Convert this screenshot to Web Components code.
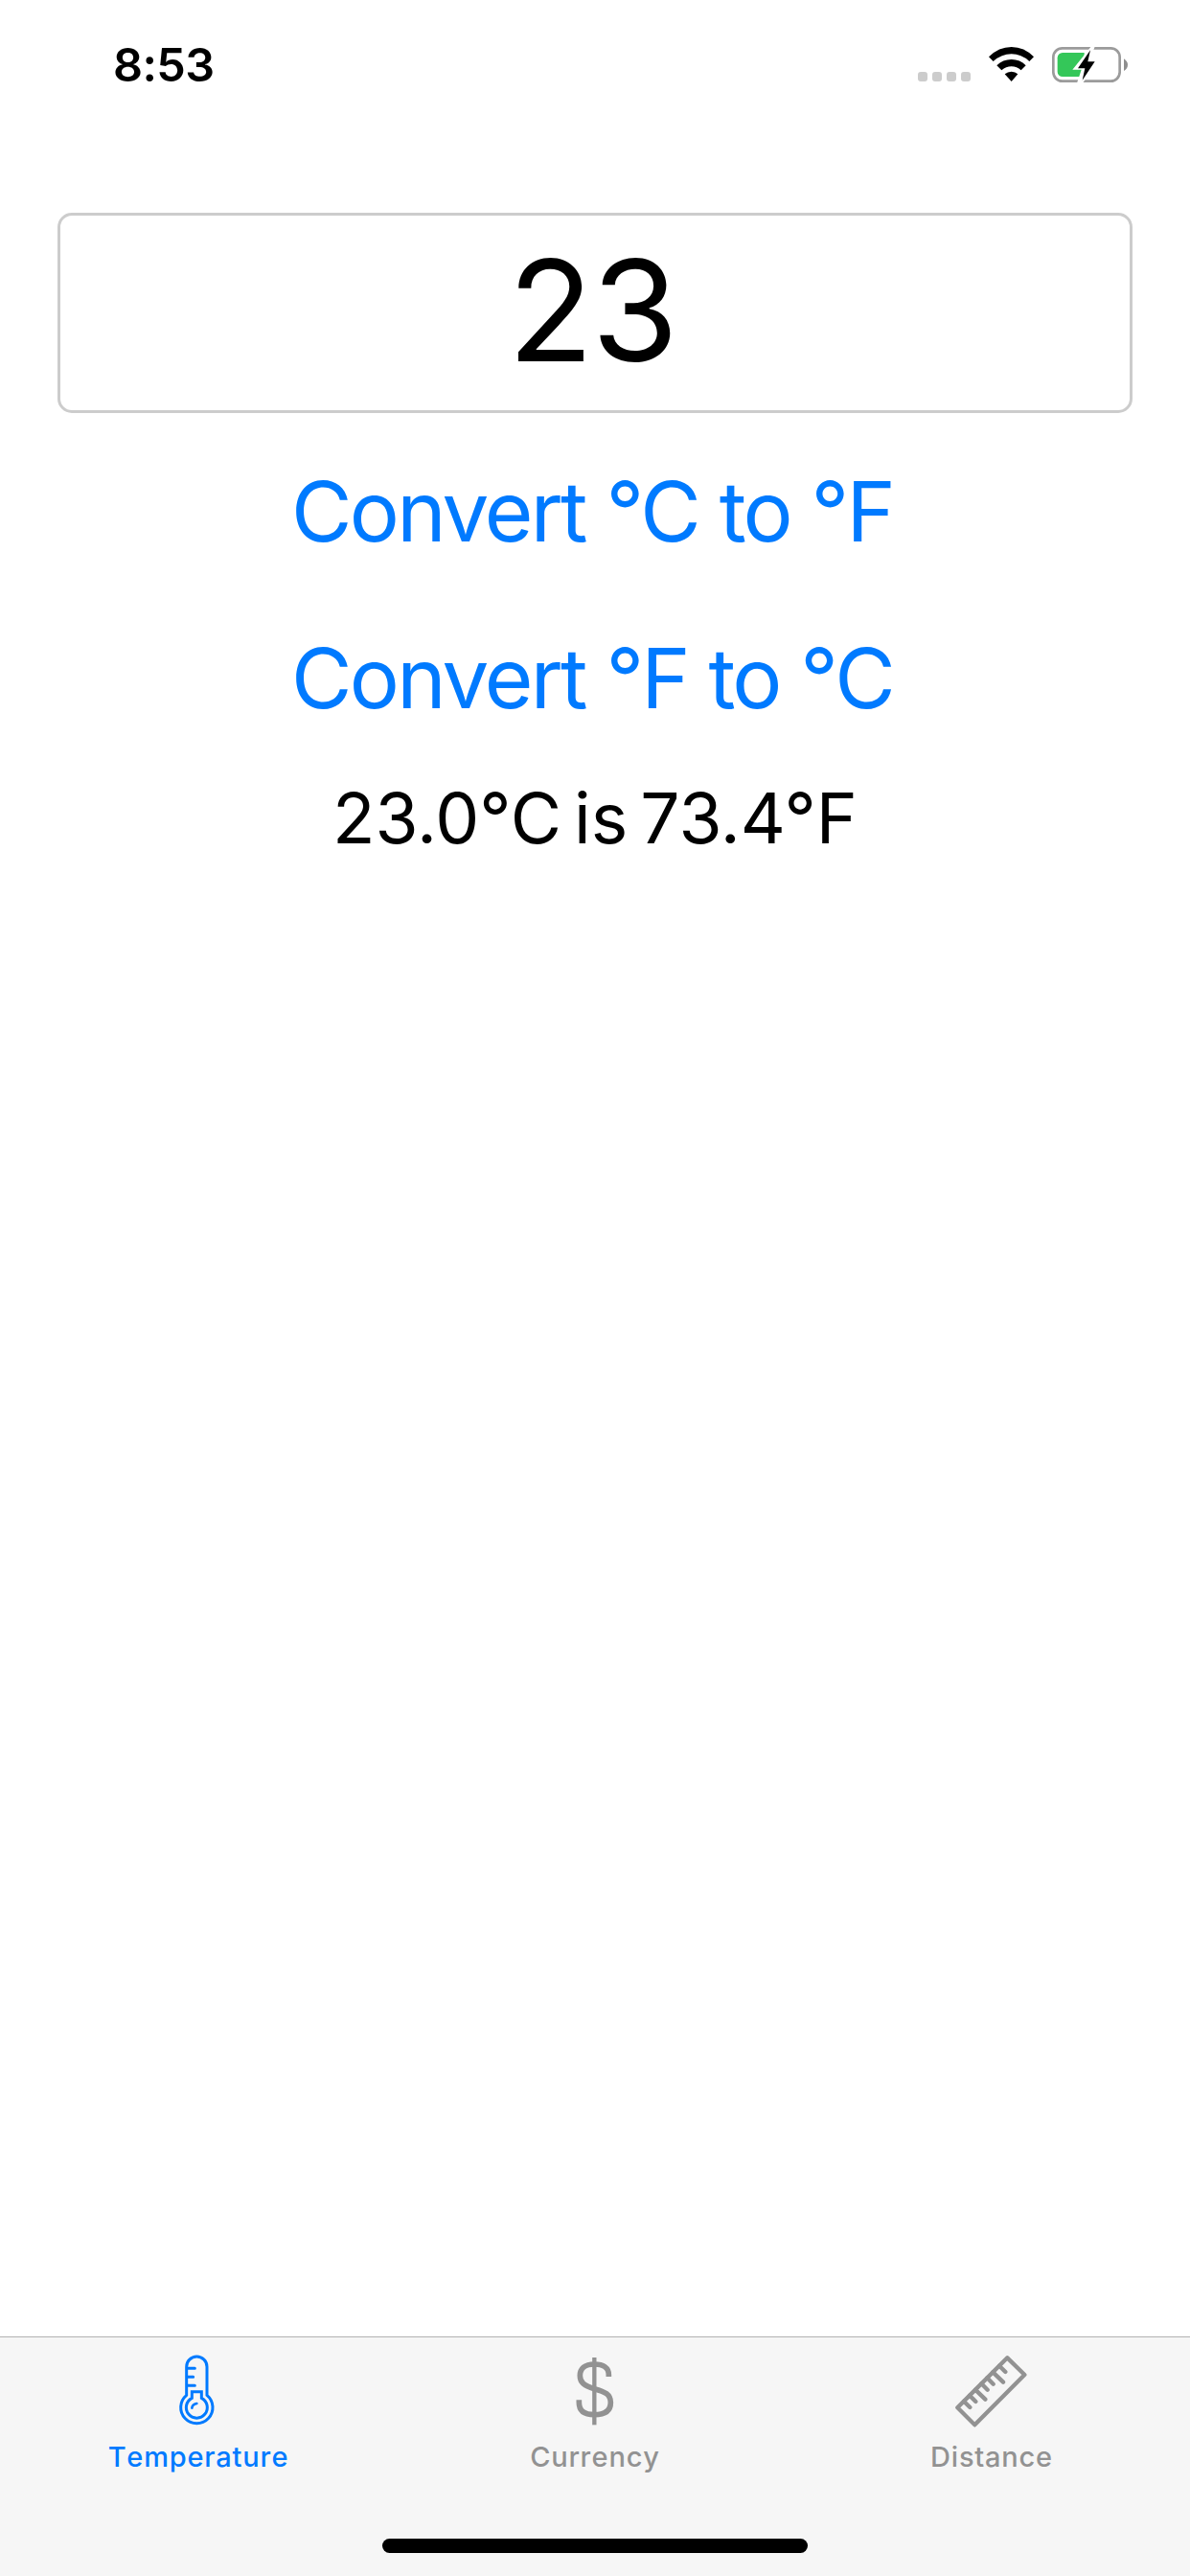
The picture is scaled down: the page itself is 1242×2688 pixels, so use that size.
<!DOCTYPE html>
<html lang="en">
<head>
<meta charset="utf-8">
<title>Converter</title>
<style>
html,body{margin:0;background:#fff}
body{font-family:Inter,"Liberation Sans",sans-serif}
</style>
</head>
<body>
<converter-app></converter-app>
<script>
const define = (name, html) => customElements.define(name, class extends HTMLElement {
  constructor() {
    super();
    this.attachShadow({ mode: 'open' }).innerHTML = html;
  }
});

define('status-bar', `
<style>
:host{display:flex;justify-content:space-between;align-items:flex-start;height:132px;box-sizing:border-box;padding:49px 64px 0 118px}
.time{font-size:48.5px;font-weight:600;line-height:38px;letter-spacing:-.6px}
.icons{display:flex;gap:19px}
svg{display:block}
</style>
<span class="time">8:53</span>
<div class="icons">
<svg width="55" height="37" viewBox="54 57 165 111" fill="#ccc"><rect x="54" y="135" width="30" height="30" rx="9"/><rect x="99" y="135" width="30" height="30" rx="9"/><rect x="144" y="135" width="30" height="30" rx="9"/><rect x="189" y="135" width="30" height="30" rx="9"/></svg>
<svg width="47" height="37" viewBox="276 57 141 111"><path d="M276 88Q307 57 347 57T417 88L403 102Q378 79 347 79T290 102Z"/><path d="M301 115Q320 96 347 96T392 115L377 130Q364 118 347 118T316 130Z"/><path d="M326 142Q335 134 347 134T367 142L347 165Z"/></svg>
<svg width="80" height="39" viewBox="474 57 240 117"><rect x="478" y="61" width="208" height="103" rx="28" fill="none" stroke="#9b9b9b" stroke-width="8"/><rect x="491" y="75" width="100" height="75" rx="16" fill="#34c759"/><rect x="575" y="70" width="35" height="84" fill="#fff"/><path d="M699 94Q711 102 711 113T699 132Z" fill="#8e8e8e"/><path d="M596 56L538 128H566L552 170H570L618 102H590L608 56Z" fill="#fff"/><path d="M594 67L555 124H577L569 161L608 103H586Z"/></svg>
</div>`);

define('value-field', `
<style>
:host{display:flex;align-items:center;justify-content:center;box-sizing:border-box;height:209px;border:3px solid #ccc;border-radius:15px;font-size:146.5px;line-height:1}
span{display:block;padding:0 6px 4px 0;letter-spacing:-2px}
</style><span><slot></slot></span>`);

define('convert-button', `
<style>
:host{display:block;text-align:center;color:#007aff;font-size:87px;line-height:106px;letter-spacing:-2.8px;padding-right:6px}
</style><slot></slot>`);

define('result-label', `
<style>
:host{display:block;text-align:center;color:#000;font-size:73px;line-height:88px;letter-spacing:0;word-spacing:-7.5px}
</style><slot></slot>`);

define('tab-item', `
<style>
:host{display:flex;flex:1;flex-direction:column;align-items:center;color:#929292}
:host([selected]){color:#007aff}
.label{font-size:29px;font-weight:500;line-height:36px;margin-top:6px;letter-spacing:.8px;font-kerning:none}
</style>
<slot name="icon"></slot><span class="label"><slot></slot></span>`);

define('tab-bar', `
<style>
:host{display:flex;flex-direction:column;justify-content:space-between;align-items:center;height:250px;box-sizing:border-box;border-top:1px solid #b2b2b2;background:#f6f6f6;padding:1px 0 24px}
.tabs{display:flex;width:100%}
.home{width:444px;height:15px;border-radius:8px;background:#000}
svg{display:block;fill:none;stroke:currentColor}
</style>
<div class="tabs">
<tab-item selected><svg slot="icon" width="90" height="100" viewBox="6 30 270 300" stroke-width="9" stroke-linecap="round"><path d="M104 208V119A32 32 0 0 1 168 119V208A50 50 0 1 1 104 208Z"/><path d="M108 124H130M108 151H125M108 178H130"/><path d="M121 197H151V217A33 33 0 1 1 121 217Z"/><path d="M121 248Q122 237 136 234" stroke-width="8"/></svg>Temperature</tab-item>
<tab-item><svg slot="icon" width="90" height="100" viewBox="3 30 270 300"><path d="M136 90V301" stroke-width="13"/><path d="M181 150V144C181 122 164 111 136 111C106 111 91 125 91 147C91 168 103 178 136 188C170 197 187 206 187 231C187 257 170 269 136 269C104 269 88 257 88 230V223" stroke-width="17"/></svg>Currency</tab-item>
<tab-item><svg slot="icon" width="90" height="100" viewBox="30 30 270 300" stroke-width="13" stroke-linejoin="round" stroke-linecap="round"><path d="M214 91L268 144L112 301L58 247Z"/><path d="M78 227L97 246M96 209L115 228M114 191L145 221M133 172L152 191M151 154L170 173M169 136L201 167M189 116L208 135"/></svg>Distance</tab-item>
</div>
<div class="home"></div>`);

define('converter-app', `
<style>
:host{display:flex;flex-direction:column;width:1242px;height:2688px;background:#fff;color:#000}
main{flex:1;display:flex;flex-direction:column;padding:90px 60px 0}
.first{margin-top:50px}
.second{margin-top:68px}
result-label{margin-top:49px}
</style>
<status-bar></status-bar>
<main>
<value-field>23</value-field>
<convert-button class="first">Convert °C to °F</convert-button>
<convert-button class="second">Convert °F to °C</convert-button>
<result-label>23.0°C is 73.4°F</result-label>
</main>
<tab-bar></tab-bar>`);
</script>
</body>
</html>
